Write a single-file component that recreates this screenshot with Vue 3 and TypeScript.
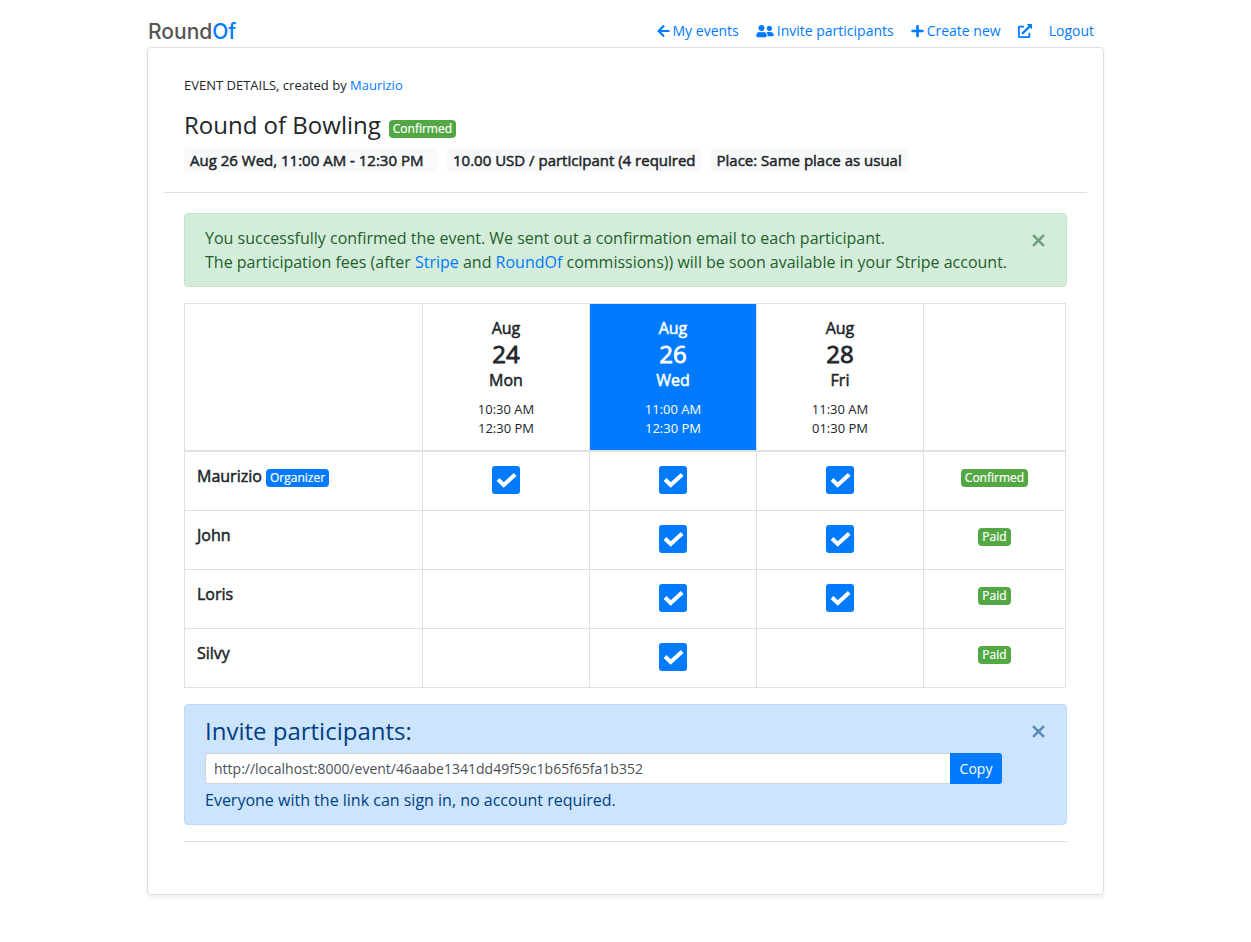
<script setup lang="ts">
import { ref } from 'vue'

interface Slot {
  month: string
  day: number
  weekday: string
  start: string
  end: string
  selected: boolean
}

interface Participant {
  name: string
  organizer: boolean
  votes: boolean[]
  status: string
}

const slots: Slot[] = [
  { month: 'Aug', day: 24, weekday: 'Mon', start: '10:30 AM', end: '12:30 PM', selected: false },
  { month: 'Aug', day: 26, weekday: 'Wed', start: '11:00 AM', end: '12:30 PM', selected: true },
  { month: 'Aug', day: 28, weekday: 'Fri', start: '11:30 AM', end: '01:30 PM', selected: false },
]

const participants = ref<Participant[]>([
  { name: 'Maurizio', organizer: true, votes: [true, true, true], status: 'Confirmed' },
  { name: 'John', organizer: false, votes: [false, true, true], status: 'Paid' },
  { name: 'Loris', organizer: false, votes: [false, true, true], status: 'Paid' },
  { name: 'Silvy', organizer: false, votes: [false, true, false], status: 'Paid' },
])

const facts: string[] = [
  'Aug 26 Wed, 11:00 AM - 12:30 PM',
  '10.00 USD / participant (4 required',
  'Place: Same place as usual',
]

const inviteUrl = ref('http://localhost:8000/event/46aabe1341dd49f59c1b65f65fa1b352')
const showSuccess = ref(true)
const showInvite = ref(true)

function copyUrl(): void {
  navigator.clipboard?.writeText(inviteUrl.value)
}
</script>

<template>
  <div class="page">
    <header class="topbar">
      <a class="logo" href="#">Round<span>Of</span></a>
      <nav class="nav">
        <a href="#">
          <svg class="i-arrow" viewBox="0 0 448 512" aria-hidden="true"><path d="M257.500 445.100l-22.200 22.200c-9.400 9.400-24.600 9.400-33.900 0L7 273c-9.400-9.400-9.400-24.600 0-33.900L201.400 44.700c9.400-9.400 24.600-9.400 33.900 0l22.200 22.200c9.500 9.500 9.300 25-.4 34.300L136.600 216H424c13.300 0 24 10.700 24 24v32c0 13.300-10.700 24-24 24H136.600l120.500 114.800c9.800 9.300 10 24.800.4 34.300z" /></svg>
          My events
        </a>
        <a href="#">
          <svg class="i-users" viewBox="0 0 640 512" aria-hidden="true"><path d="M192 256c61.900 0 112-50.100 112-112S253.900 32 192 32 80 82.100 80 144s50.100 112 112 112zm76.800 32h-8.300c-20.800 10-43.900 16-68.500 16s-47.600-6-68.500-16h-8.300C51.600 288 0 339.600 0 403.200V432c0 26.500 21.500 48 48 48h288c26.500 0 48-21.500 48-48v-28.800c0-63.600-51.600-115.200-115.200-115.200zM480 256c53 0 96-43 96-96s-43-96-96-96-96 43-96 96 43 96 96 96zm48 32h-3.800c-13.900 4.800-28.600 8-44.200 8s-30.300-3.200-44.200-8H432c-20.400 0-39.200 5.900-55.700 15.400 24.400 26.300 39.700 61.200 39.700 99.800v38.400c0 2.200-.5 4.300-.6 6.400H592c26.500 0 48-21.500 48-48 0-61.900-50.100-112-112-112z" /></svg>
          Invite participants
        </a>
        <a href="#">
          <svg class="i-plus" viewBox="0 0 448 512" aria-hidden="true"><path d="M416 208H272V64c0-17.700-14.300-32-32-32h-32c-17.700 0-32 14.300-32 32v144H32c-17.700 0-32 14.300-32 32v32c0 17.700 14.300 32 32 32h144v144c0 17.700 14.300 32 32 32h32c17.700 0 32-14.300 32-32V304h144c17.700 0 32-14.300 32-32v-32c0-17.700-14.300-32-32-32z" /></svg>
          Create new
        </a>
        <a href="#" aria-label="Open in new window">
          <svg class="i-ext" viewBox="0 0 512 512" aria-hidden="true"><path d="M432 320h-32a16 16 0 0 0-16 16v112H64V128h144a16 16 0 0 0 16-16V80a16 16 0 0 0-16-16H48a48 48 0 0 0-48 48v352a48 48 0 0 0 48 48h352a48 48 0 0 0 48-48V336a16 16 0 0 0-16-16zM488 0H360c-21.400 0-32 25.900-17 41l35.700 35.700L135 320.400a24 24 0 0 0 0 34L157.700 377a24 24 0 0 0 34 0l243.600-243.700L471 169c15 15 41 4.500 41-17V24a24 24 0 0 0-24-24z" /></svg>
        </a>
        <a href="#">Logout</a>
      </nav>
    </header>

    <main class="card">
      <section class="summary">
        <p class="created">EVENT DETAILS, created by <a href="#">Maurizio</a></p>
        <h1 class="title">Round of Bowling <span class="badge success">Confirmed</span></h1>
        <ul class="facts">
          <li v-for="fact in facts" :key="fact">{{ fact }}</li>
        </ul>
      </section>

      <div class="content">
        <div v-if="showSuccess" class="alert alert-success" role="alert">
          <p>
            You successfully confirmed the event. We sent out a confirmation email to each participant.<br />
            The participation fees (after <a href="#">Stripe</a> and <a href="#">RoundOf</a> commissions)) will be soon
            available in your Stripe account.
          </p>
          <button class="close" type="button" aria-label="Close" @click="showSuccess = false">
            <svg viewBox="0 0 12 12" aria-hidden="true"><path d="M1 1l10 10M11 1L1 11" /></svg>
          </button>
        </div>

        <table class="poll">
          <colgroup>
            <col />
            <col v-for="slot in slots" :key="slot.day" class="col-slot" />
            <col class="col-status" />
          </colgroup>
          <thead>
            <tr>
              <td></td>
              <th v-for="slot in slots" :key="slot.day" scope="col" :class="{ selected: slot.selected }">
                <div class="month">{{ slot.month }}</div>
                <div class="day">{{ slot.day }}</div>
                <div class="month">{{ slot.weekday }}</div>
                <div class="time">{{ slot.start }}<br />{{ slot.end }}</div>
              </th>
              <td></td>
            </tr>
          </thead>
          <tbody>
            <tr v-for="person in participants" :key="person.name">
              <th scope="row">
                {{ person.name }} <span v-if="person.organizer" class="badge primary">Organizer</span>
              </th>
              <td v-for="(vote, index) in person.votes" :key="index">
                <label v-if="vote" class="tick">
                  <input
                    v-model="person.votes[index]"
                    type="checkbox"
                    :aria-label="`${person.name}, ${slots[index].month} ${slots[index].day}`"
                  />
                  <svg viewBox="0 0 28 28" aria-hidden="true"><path d="M6 13.500l5.700 5.500L23.200 8.500" /></svg>
                </label>
              </td>
              <td><span class="badge success">{{ person.status }}</span></td>
            </tr>
          </tbody>
        </table>

        <div v-if="showInvite" class="alert alert-primary">
          <div class="invite">
            <h2><label for="invite-url">Invite participants:</label></h2>
            <div class="input-group">
              <input id="invite-url" v-model="inviteUrl" type="text" readonly />
              <button type="button" @click="copyUrl">Copy</button>
            </div>
            <p>Everyone with the link can sign in, no account required.</p>
          </div>
          <button class="close" type="button" aria-label="Close" @click="showInvite = false">
            <svg viewBox="0 0 12 12" aria-hidden="true"><path d="M1 1l10 10M11 1L1 11" /></svg>
          </button>
        </div>
        <hr />
      </div>
    </main>
  </div>
</template>

<style>
body {
  margin: 0;
  background: #fff;
}
</style>

<style scoped>
* {
  box-sizing: border-box;
}

.page {
  max-width: 957px;
  margin: 0 auto;
  padding-bottom: 47px;
  color: #212529;
  font: 400 16px/24px "Open Sans", "Noto Sans", sans-serif;
}

a {
  color: #007bff;
  text-decoration: none;
}

p,
h1,
h2,
ul {
  margin: 0;
  padding: 0;
  font-weight: 400;
}

button,
input {
  font-family: inherit;
}

.topbar {
  display: flex;
  align-items: flex-start;
  justify-content: space-between;
  height: 47px;
  padding: 15px 10px 0 1px;
}

.logo {
  color: #555;
  font: 500 21px/34px Inter, sans-serif;
}

.logo span {
  color: #007bff;
}

.nav {
  display: flex;
  gap: 17px;
  font-size: 14px;
  line-height: 32px;
}

.nav a {
  display: flex;
  align-items: center;
  gap: 3px;
}

.nav svg {
  height: 14px;
  fill: currentColor;
}

.i-arrow {
  width: 13px;
}

.i-users {
  width: 18px;
}

.i-plus {
  width: 13px;
}

.i-ext {
  width: 14px;
}

.card {
  padding: 0 16px 52px;
  border: 1px solid #dfdfdf;
  border-radius: 4px;
  box-shadow: 0 2px 4px rgba(0, 0, 0, 0.075);
}

.summary {
  padding: 27px 20px 20px;
  border-bottom: 1px solid #dfdfdf;
}

.created {
  font-size: 13px;
  line-height: 20px;
}

.title {
  display: flex;
  align-items: center;
  gap: 8px;
  margin: 15px 0 8px;
  font-size: 24px;
  line-height: 30px;
}

.title .badge {
  margin-top: 8px;
}

.facts {
  display: grid;
  grid-template-columns: repeat(2, minmax(254px, max-content)) max-content;
  gap: 9px;
  list-style: none;
  font-size: 15px;
  line-height: 24px;
  -webkit-text-stroke: 0.5px currentColor;
}

.facts li {
  padding: 0 6px;
  border-radius: 4px;
  background: #f8f9fa;
}

.content {
  padding: 20px 20px 0;
}

.badge {
  display: inline-block;
  padding: 0 4px;
  border-radius: 4px;
  color: #fff;
  font-size: 12px;
  line-height: 18px;
  -webkit-text-stroke: 0.2px currentColor;
}

.badge.success {
  background: #53a844;
}

.badge.primary {
  background: #007bff;
}

.alert {
  display: flex;
  align-items: flex-start;
  justify-content: space-between;
  gap: 16px;
  padding: 12px 20px;
  border: 1px solid;
  border-radius: 4px;
}

.alert-success {
  border-color: #c3e6cb;
  background: #d4edda;
  color: #235f2c;
}

.alert-primary {
  border-color: #b8daff;
  background: #cce4fc;
  color: #004085;
}

.close {
  flex: none;
  display: flex;
  margin: 8px 1px;
  padding: 0;
  border: 0;
  background: none;
  color: inherit;
  opacity: 0.55;
  cursor: pointer;
}

.close svg {
  width: 13px;
  height: 13px;
  fill: none;
  stroke: currentColor;
  stroke-width: 2.4;
}

.poll {
  width: calc(100% - 1px);
  margin: 16px 0;
  table-layout: fixed;
  border-collapse: collapse;
  text-align: center;
}

.col-slot {
  width: 167px;
}

.col-status {
  width: 142px;
}

.poll th,
.poll td {
  padding: 12px;
  border: 1px solid #dee2e6;
  font-weight: 400;
  vertical-align: top;
}

.poll thead th,
.poll thead td {
  border-bottom-width: 2px;
}

.poll tbody th {
  text-align: left;
}

.poll tbody th,
.month,
.day {
  -webkit-text-stroke: 0.5px currentColor;
}

.day {
  -webkit-text-stroke-width: 0.8px;
}

.poll .badge {
  -webkit-text-stroke: 0.2px currentColor;
}

.poll .selected {
  background: #007bff;
  color: #fff;
}

.day {
  font-size: 24px;
  line-height: 28px;
}

.time {
  margin-top: 8px;
  font-size: 13px;
  line-height: 19px;
}

.tick {
  display: grid;
  justify-content: center;
  padding: 2px 0 4px;
}

.tick input,
.tick svg {
  grid-area: 1 / 1;
  width: 28px;
  height: 28px;
}

.tick input {
  margin: 0;
  appearance: none;
  border-radius: 3px;
  background: #007bff;
}

.tick svg {
  fill: none;
  stroke: #fff;
  stroke-width: 4;
  pointer-events: none;
}

.invite {
  flex: 1;
  max-width: 797px;
}

.invite h2 {
  margin-bottom: 8px;
  font-size: 24px;
  line-height: 28px;
}

.input-group {
  display: flex;
  margin-bottom: 4px;
}

.input-group input {
  flex: 1;
  min-width: 0;
  height: 31px;
  padding: 4px 8px;
  border: 1px solid #ced4da;
  border-right: 0;
  border-radius: 3px 0 0 3px;
  background: #fff;
  color: #495057;
  font-size: 14px;
}

.input-group button {
  width: 52px;
  padding: 0;
  border: 0;
  border-radius: 0 3px 3px 0;
  background: #007bff;
  color: #fff;
  font-size: 14px;
}

hr {
  margin: 16px 0 0;
  border: 0;
  border-top: 1px solid #dfdfdf;
}
</style>
